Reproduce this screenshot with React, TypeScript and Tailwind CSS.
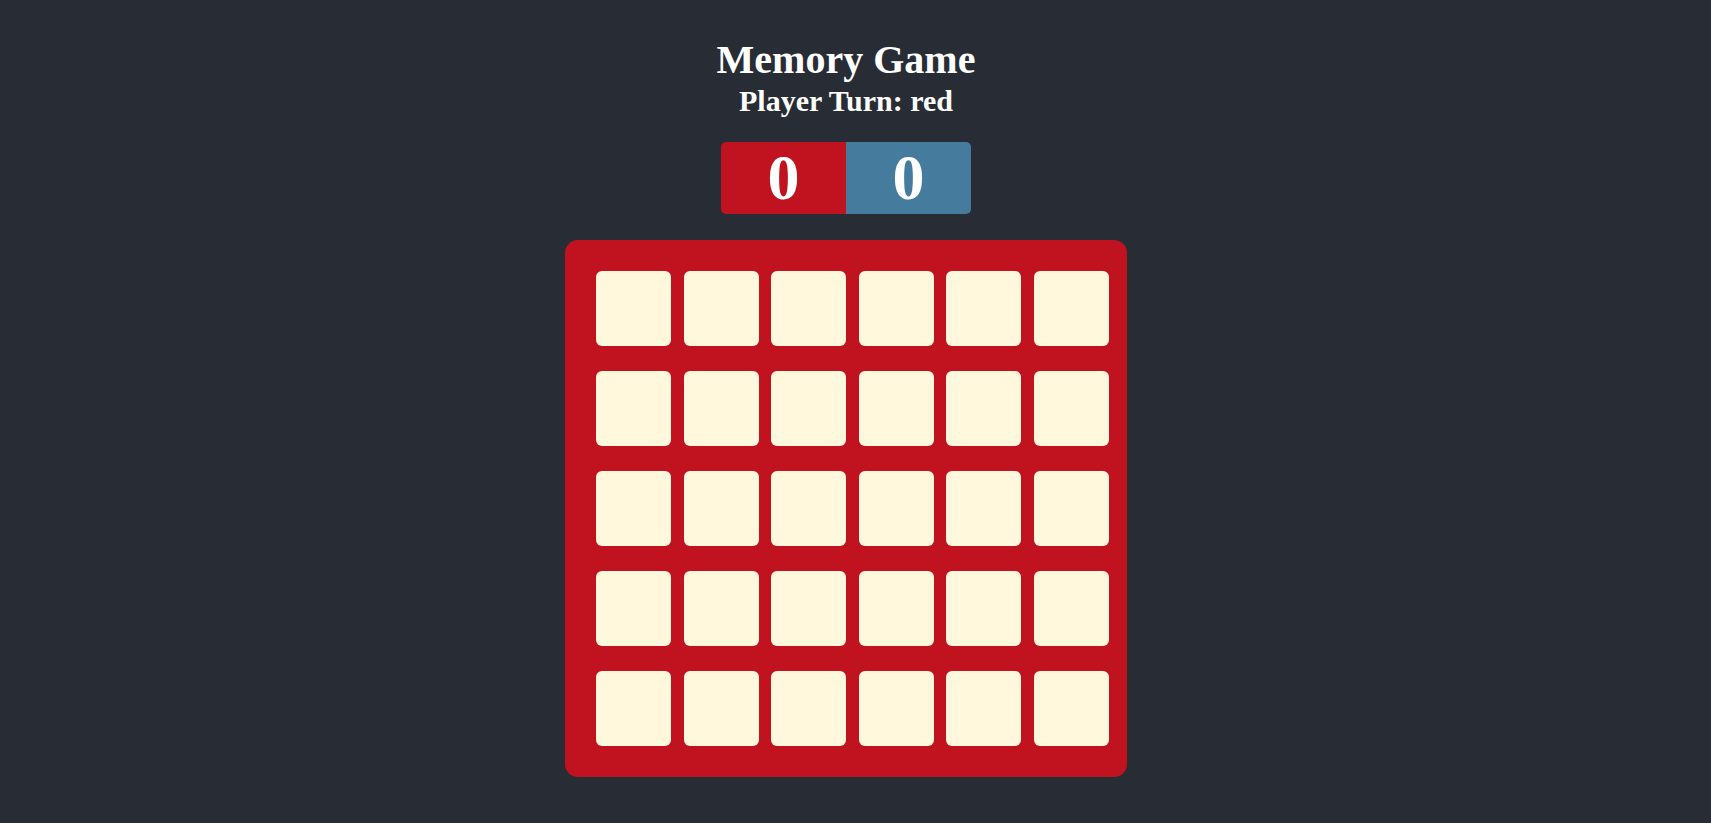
const TILES = Array.from({ length: 30 }, (_, i) => i);

export default function App() {
  const turn = 'red';
  const scores = { red: 0, blue: 0 };

  return (
    <div
      className="min-h-screen bg-[#282c34] text-white flex flex-col items-center pr-[19px] pt-[37px]"
      style={{ fontFamily: '"Liberation Serif", "Times New Roman", serif' }}
    >
      <h1 className="text-[40px] leading-[46px] font-bold">Memory Game</h1>
      <h2 className="mt-[1px] text-[30px] leading-[34px] font-bold">Player Turn: {turn}</h2>

      {/* Scoreboard */}
      <div className="mt-[24px] flex h-[72px] rounded-[5px] overflow-hidden">
        <div className="w-[125px] bg-[#c1121f] flex items-center justify-center text-[64px] leading-none font-bold">
          {scores.red}
        </div>
        <div className="w-[125px] bg-[#457b9d] flex items-center justify-center text-[64px] leading-none font-bold">
          {scores.blue}
        </div>
      </div>

      {/* Board */}
      <div className="mt-[26px] w-[562px] bg-[#c1121f] rounded-[13px] pl-[31px] pr-[18px] py-[31px]">
        <div className="grid grid-cols-[repeat(6,75px)] gap-x-[12.6px] gap-y-[25px]">
          {TILES.map((t) => (
            <button key={t} className="w-[75px] h-[75px] bg-[#fff8dc] rounded-[6px]" />
          ))}
        </div>
      </div>
    </div>
  );
}
